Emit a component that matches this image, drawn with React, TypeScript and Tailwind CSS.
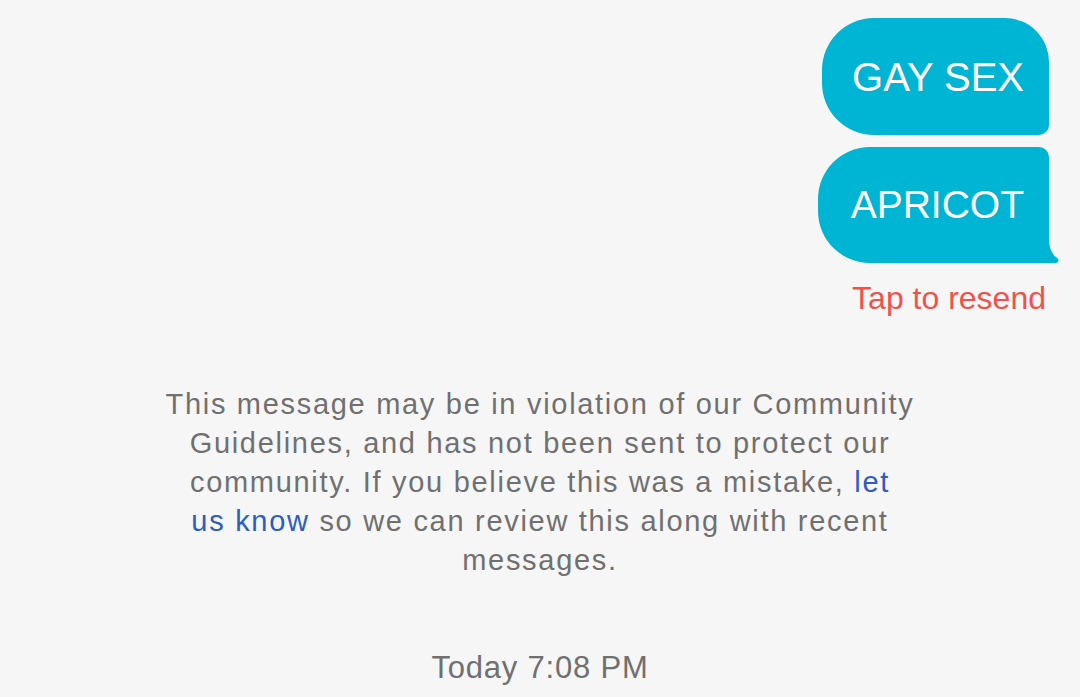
export default function App() {
  return (
    <div
      className="flex h-[697px] w-[1080px] flex-col overflow-hidden bg-[#f6f6f6]"
      style={{ fontFamily: '"Liberation Sans", Arial, sans-serif' }}
    >
      <div className="flex flex-col items-end gap-[12px] pr-[31px] pt-[18px]">
        <div className="flex h-[117px] items-center rounded-l-[52px] rounded-tr-[44px] rounded-br-[10px] bg-[#00b4d4] pl-[30px] pr-[25px] text-[40px] text-white">
          GAY SEX
        </div>
        <div className="relative flex h-[116px] items-center rounded-l-[52px] rounded-tr-[10px] rounded-br-none bg-[#00b4d4] pl-[33px] pr-[25px] text-[39px] text-white">
          APRICOT
          <svg
            className="absolute bottom-0 right-[-10px]"
            width="10"
            height="22"
            viewBox="0 0 10 22"
          >
            <path d="M0 0 Q1 12 7 16 Q10 18 9.5 20 Q9 22 5 22 L0 22 Z" fill="#00b4d4" />
          </svg>
        </div>
      </div>
      <div className="flex justify-end pr-[34px] pt-[16px] text-[32px] leading-[38px] text-[#f0524a]">
        Tap to resend
      </div>
      <div className="flex justify-center pt-[68px]">
        <p className="text-center text-[29px] leading-[39px] tracking-[1.7px] text-[#707070]">
          This message may be in violation of our Community
          <br />
          Guidelines, and has not been sent to protect our
          <br />
          community. If you believe this was a mistake, <span className="text-[#2f5cc0]">let</span>
          <br />
          <span className="text-[#2f5cc0]">us know</span> so we can review this along with recent
          <br />
          messages.
        </p>
      </div>
      <div className="flex justify-center pt-[69px] text-[31px] leading-[37px] tracking-[0.8px] text-[#707070]">
        Today 7:08 PM
      </div>
    </div>
  );
}
